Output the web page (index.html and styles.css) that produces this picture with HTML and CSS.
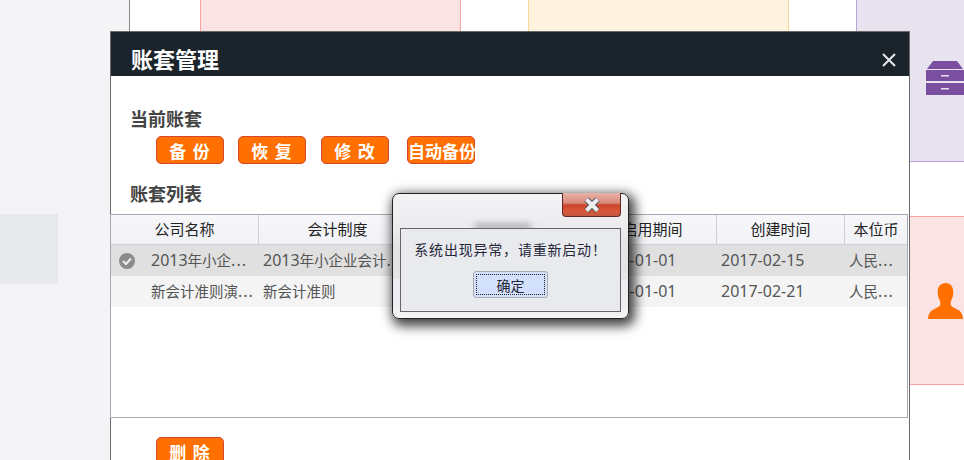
FILE: index.html
```html
<!DOCTYPE html>
<html lang="zh-CN">
<head>
  <meta charset="UTF-8">
  <title>账套管理</title>
  <link rel="stylesheet" href="styles.css">
</head>
<body>
  <div class="page">
    <div class="sidebar">
      <div class="side-block"></div>
    </div>
    <div class="main">
      <div class="tile-row">
        <div class="tile tile-pink"></div>
        <div class="tile tile-yellow"></div>
        <div class="tile tile-purple">
          <svg class="tile-icon" width="38" height="34" viewBox="0 0 38 34">
            <path fill="#7a4f9f" d="M7 0H31L37 8H1Z"/>
            <path fill="#7a4f9f" fill-rule="evenodd" d="M0 9H38V20H0ZM15 14V15.500H23V14Z"/>
            <path fill="#7a4f9f" fill-rule="evenodd" d="M0 22H38V34H0ZM15 27V28.500H23V27Z"/>
          </svg>
        </div>
      </div>
      <div class="tile-row">
        <div class="tile tile-pink"></div>
        <div class="tile tile-yellow"></div>
        <div class="tile tile-pink">
          <svg class="tile-icon icon-person" width="35" height="36" viewBox="0 0 36 36" preserveAspectRatio="none">
            <path fill="#ff7000" d="M18 0C23.500 0 26 4 26 9C26 12 25.500 14 24.500 16C23.500 18 23 20 23.500 22C24 24 28 25 31 27C34 28.500 35.500 31 36 36H0C0.500 31 2 28.500 5 27C8 25 12 24 12.500 22C13 20 12.500 18 11.500 16C10.500 14 10 12 10 9C10 4 12.500 0 18 0Z"/>
          </svg>
        </div>
      </div>
    </div>

    <div class="modal">
      <div class="modal-head">
        <span class="modal-title">账套管理</span>
        <svg class="modal-close" width="14" height="14" viewBox="0 0 14 14">
          <path d="M1 1L13 13M13 1L1 13" stroke="#e6e8ea" stroke-width="2" fill="none"/>
        </svg>
      </div>
      <div class="section-title first">当前账套</div>
      <div class="btn-row">
        <button class="btn spaced">备 份</button>
        <button class="btn spaced">恢 复</button>
        <button class="btn spaced">修 改</button>
        <button class="btn tight">自动备份</button>
      </div>
      <div class="section-title second">账套列表</div>
      <div class="list">
        <table>
          <colgroup>
            <col class="col-name">
            <col class="col-rule">
            <col class="col-type">
            <col class="col-date">
            <col class="col-date">
            <col class="col-cur">
          </colgroup>
          <thead>
            <tr>
              <th>公司名称</th>
              <th>会计制度</th>
              <th></th>
              <th>启用期间</th>
              <th>创建时间</th>
              <th>本位币</th>
            </tr>
          </thead>
          <tbody>
            <tr class="selected">
              <td class="td-name">
                <svg class="check" width="16" height="16" viewBox="0 0 16 16">
                  <circle cx="8" cy="8" r="8" fill="#8c8c8c"/>
                  <path d="M4 8L7 11L12 5.500" stroke="#f0f0f0" stroke-width="2" fill="none"/>
                </svg><span class="num">2013</span>年小企<span class="dots">...</span>
              </td>
              <td><span class="num">2013</span>年小企业会计<span class="dots">...</span></td>
              <td></td>
              <td><span class="num">2017-01-01</span></td>
              <td><span class="num">2017-02-15</span></td>
              <td>人民<span class="dots">...</span></td>
            </tr>
            <tr>
              <td class="td-name"><span class="check-gap"></span>新会计准则演<span class="dots">...</span></td>
              <td>新会计准则</td>
              <td></td>
              <td><span class="num">2017-01-01</span></td>
              <td><span class="num">2017-02-21</span></td>
              <td>人民<span class="dots">...</span></td>
            </tr>
          </tbody>
        </table>
      </div>
      <div class="btn-row bottom">
        <button class="btn spaced">删 除</button>
      </div>
    </div>

    <div class="dialog">
      <div class="dialog-blur"></div>
      <div class="dialog-bar">
        <button class="dialog-x">
          <svg width="18" height="16" viewBox="0 0 18 16">
            <path d="M3.500 2.500L14.500 13.500M14.500 2.500L3.500 13.500" stroke="#4a5060" stroke-width="6" fill="none"/>
            <path d="M3.500 2.500L14.500 13.500M14.500 2.500L3.500 13.500" stroke="#eeeef2" stroke-width="4" fill="none"/>
          </svg>
        </button>
      </div>
      <div class="dialog-body">
        <div class="dialog-msg">系统出现异常，请重新启动！</div>
        <button class="dialog-ok"><span class="dialog-ok-in">确定</span></button>
      </div>
    </div>
  </div>
</body>
</html>
```

FILE: styles.css
```css
* {
  box-sizing: border-box;
}
html, body {
  margin: 0;
  height: 460px;
  overflow: hidden;
}
body {
  font-family: "Noto Sans", "Noto Sans CJK SC", sans-serif;
  background-color: #fff;
}
.page {
  position: relative;
  display: flex;
  width: 964px;
  height: 460px;
  overflow: hidden;
}
.sidebar {
  width: 129px;
  flex: none;
  background-color: #f4f4f7;
  padding-top: 214px;
}
.side-block {
  width: 58px;
  height: 70px;
  background-color: #e8e9ec;
}
.main {
  flex: none;
  width: 835px;
  margin-top: -7px;
  height: 467px;
  padding-left: 70px;
  border-left: 1px solid #8a8a8a;
  display: flex;
  flex-direction: column;
  gap: 54px;
}
.tile-row {
  display: flex;
  gap: 67px;
}
.tile {
  flex: none;
  width: 261px;
  height: 169px;
  border: 1px solid;
  display: flex;
  align-items: center;
  padding-left: 69px;
}
.tile-pink {
  background-color: #fce3e3;
  border-color: #f9a3a3;
}
.tile-yellow {
  background-color: #fef3df;
  border-color: #fcd79a;
}
.tile-purple {
  background-color: #e9e3f0;
  border-color: #b9a3d6;
}
.tile-icon {
  flex: none;
}
.icon-person {
  margin-left: 2px;
}

.modal {
  position: absolute;
  left: 110px;
  top: 31px;
  width: 800px;
  height: 520px;
  background-color: #fff;
  border: 1px solid #6a6a6a;
}
.modal-head {
  height: 44px;
  background-color: #1c242b;
  display: flex;
  align-items: center;
  justify-content: space-between;
  padding: 0 13px 0 20px;
}
.modal-title {
  color: #fff;
  font-size: 22px;
  font-weight: 700;
  line-height: 54px;
  height: 44px;
}
.modal-close {
  margin-top: 11px;
}
.section-title {
  font-size: 18px;
  font-weight: 700;
  color: #444;
  line-height: 26px;
  padding-left: 19px;
}
.section-title.first {
  margin-top: 30px;
}
.section-title.second {
  margin-top: 17px;
}
.btn-row {
  display: flex;
  gap: 14px;
  margin-top: 4px;
  padding-left: 45px;
}
.btn-row.bottom {
  margin-top: 19px;
}
.btn {
  width: 68px;
  height: 28px;
  padding: 0;
  background-color: #ff7000;
  border: 1px solid #d5482e;
  border-radius: 5px;
  color: #fff;
  font-family: inherit;
  font-weight: 700;
  white-space: pre;
}
.btn.spaced {
  font-size: 17px;
  letter-spacing: 1px;
}
.btn.tight {
  font-size: 17px;
  margin-left: 4px;
}
.btn-row .btn:nth-child(3) {
  margin-left: 1px;
}
.list {
  width: 798px;
  height: 204px;
  margin: 7px 0 0 -1px;
  border: 1px solid #a8a8b4;
}
table {
  width: 796px;
  table-layout: fixed;
  border-collapse: separate;
  border-spacing: 0;
  font-size: 14.5px;
}
.col-name {
  width: 148px;
}
.col-rule {
  width: 158px;
}
.col-type {
  width: 172px;
}
.col-date {
  width: 128px;
}
.col-cur {
  width: 62px;
}
th {
  height: 30px;
  padding: 0 0 2px;
  font-size: 15px;
  font-weight: 400;
  color: #222;
  background: linear-gradient(#f7f7fa, #f1f2f5);
  border-right: 1px solid #cfd0da;
  border-bottom: 1px solid #cfd0da;
}
th:last-child {
  border-right: none;
}
td {
  height: 31px;
  padding: 0 0 2px 4px;
  color: #555;
  background-color: #f4f4f4;
  white-space: nowrap;
  overflow: hidden;
}
.selected td {
  background-color: #e0e0e0;
}
.td-name {
  padding-left: 8px;
}
.num {
  font-size: 16px;
}
.dots {
  font-size: 16px;
  letter-spacing: 1px;
}
.check {
  vertical-align: -3px;
  margin-right: 16px;
}
.check-gap {
  display: inline-block;
  width: 32px;
}

.dialog {
  position: absolute;
  left: 392px;
  top: 193px;
  width: 237px;
  height: 126px;
  border: 1px solid #222;
  border-radius: 7px;
  background: linear-gradient(#f4f2f5 0, #efeef1 20px, #ebebee 34px, #e4e4e6 52px, #e4e4e6 84px, #ecedf0 86px, #eeeef1 112px, #f6f6f8 126px);
  box-shadow: 3px 4px 12px 3px rgba(0, 0, 0, 0.75);
}
.dialog-blur {
  position: absolute;
  left: 82px;
  top: 30px;
  width: 56px;
  height: 5px;
  background-color: #a0a0a4;
  filter: blur(3px);
}
.dialog-bar {
  position: relative;
  display: flex;
  justify-content: flex-end;
  padding-right: 7px;
  height: 34px;
}
.dialog-x {
  width: 59px;
  height: 24px;
  margin-top: -1px;
  padding: 0;
  border: 1px solid #5e2a28;
  border-top: none;
  border-radius: 0 0 4px 4px;
  background: linear-gradient(#e8b2a8 0, #d98a78 10px, #c8432a 12px, #db5636 17px, #bd5a44 24px);
  display: flex;
  align-items: center;
  justify-content: center;
}
.dialog-body {
  position: relative;
  width: 221px;
  height: 84px;
  margin-left: 7px;
  background-color: #e9eaee;
  border: 1px solid #666;
  display: flex;
  flex-direction: column;
  align-items: center;
}
.dialog-msg {
  margin-top: 11px;
  font-size: 14px;
  line-height: 20px;
  color: #26263a;
  letter-spacing: 0.8px;
  white-space: nowrap;
}
.dialog-ok {
  width: 75px;
  height: 27px;
  margin-top: 11px;
  padding: 2px;
  border: 1px solid #a9acb5;
  border-radius: 3px;
  background-color: #d3e0fb;
  font-family: inherit;
  font-size: 14px;
  color: #26263a;
}
.dialog-ok-in {
  display: flex;
  align-items: center;
  justify-content: center;
  height: 100%;
  border: 1px dotted #222;
}
```
